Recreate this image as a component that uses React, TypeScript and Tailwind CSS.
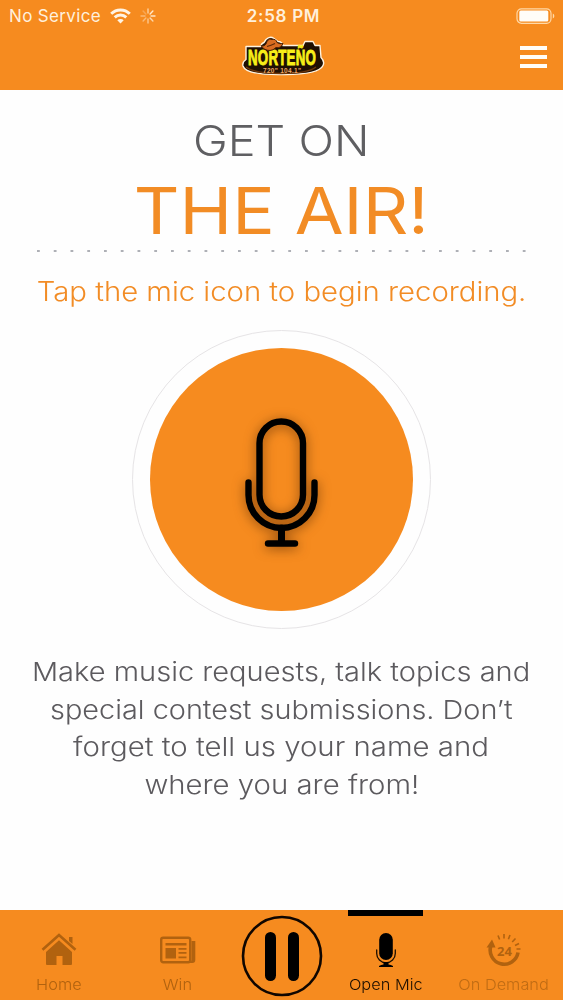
import React from 'react';

const StatusBar = () => {
  return <div className="flex h-8 items-center justify-between pl-[9px] pr-[8px] text-[17px] text-[#fff0dc]">
      <div className="flex w-[200px] items-center">
        <span className="w-[101px] pt-px whitespace-nowrap tracking-[0.35px]">No Service</span>
        <svg className="h-4 w-[21px]" viewBox="0 0 21 16" fill="none" stroke="#fff4e4" strokeWidth="2.9">
          <path d="M1.2 5.8a13.2 13.2 0 0 1 18.6 0" />
          <path d="M4.7 9.4a8.3 8.3 0 0 1 11.6 0" />
          <path d="M10.5 15.6l-3.2-3.3a4.6 4.6 0 0 1 6.4 0z" fill="#fff4e4" stroke="none" />
        </svg>
        <svg className="ml-[9px] h-4 w-4" viewBox="0 0 16 16" stroke="#ffe9cc" strokeWidth="1.4" strokeLinecap="round">
          <path d="M8 1v4" opacity=".75" />
          <path d="M12.9 3.1l-2.8 2.8" />
          <path d="M15 8h-4" opacity=".95" />
          <path d="M12.9 12.9l-2.8-2.8" opacity=".8" />
          <path d="M8 15v-4" opacity=".65" />
          <path d="M3.1 12.9l2.8-2.8" opacity=".5" />
          <path d="M1 8h4" opacity=".5" />
          <path d="M3.1 3.1l2.8 2.8" opacity=".3" />
        </svg>
      </div>
      <span className="pt-px pl-[3px] whitespace-nowrap font-semibold tracking-[0.7px]">2:58 PM</span>
      <div className="flex w-[200px] justify-end">
        <svg className="h-[17px] w-[39px]" viewBox="0 0 39 17">
          <rect x="1" y="0.8" width="34" height="14.5" rx="4.5" fill="none" stroke="#ffd9a8" strokeWidth="1.2" />
          <rect x="3.3" y="2.5" width="29" height="11" rx="1.5" fill="#fffdf8" />
          <path d="M36.8 5.5v5c2-.9 2-4.1 0-5z" fill="#ffd9a8" />
        </svg>
      </div>
    </div>
};

const Logo = () => {
  return <svg className="h-[42px] w-[80px] overflow-visible" viewBox="0 0 80 42">
      <path d="M4 10.5h15q0-3 3-4l2-3q4-4 8-1l4 3q4 0 5 4h20l2-4h8l2 4h5l1 12q4 4 2 8-4 9-38 9Q4 39.500 1 30q-1-4 3-6.500z" fill="#1f0f02" stroke="#fff3df" strokeWidth="1.4" strokeLinejoin="round" />
      <path d="M4 31q8 6.500 35 6.500t35-6.500" fill="none" stroke="#6e370a" strokeWidth="1.5" />
      <g transform="translate(6 28.5) scale(.59 1)">
        <text textLength="115" fill="#f8ee18" className="font-['Liberation_Sans',sans-serif] text-[22.5px] font-bold [stroke-width:1px] [stroke:#f8ee18]">NORTEÑO</text>
      </g>
      <path d="M19 9.500q4 2 6-4 2-4 5-2 4-1 5 3 3 2 6 1-2 5-7 4-3 3-6 3-6 0-9-5z" fill="#d96c20" stroke="#4d2305" strokeWidth="1" />
      <path d="M25 10.500q4-1 8-3" fill="none" stroke="#5c2908" strokeWidth="1.2" />
      <text x="21" y="36.500" textLength="38" fill="#f0a660" className="font-['Liberation_Sans',sans-serif] text-[6.5px] font-bold">720" 104.1"</text>
    </svg>
};

const Header = () => {
  return <header className="h-[90px] bg-[#f68b1f]">
      <StatusBar />
      <div className="flex h-[50px] items-center justify-between px-4">
        <span className="w-7" />
        <Logo />
        <button className="flex w-7 flex-col items-end gap-[4.5px]">
          <span className="h-[4.5px] w-[27px] bg-[#fffdf8]" />
          <span className="h-[4.5px] w-[27px] bg-[#fffdf8]" />
          <span className="h-[4.5px] w-[27px] bg-[#fffdf8]" />
        </button>
      </div>
    </header>
};

const MicButton = () => {
  return <button className="mt-[19px] flex size-[299px] shrink-0 items-center justify-center rounded-full border border-[#e6e4e6]">
      <span className="flex size-[263px] items-center justify-center rounded-full bg-[#f68b1f]">
        <svg className="h-[160px] w-[105px] overflow-visible drop-shadow-[0_2px_6px_rgba(70,30,0,0.6)]" viewBox="0 0 105 160" fill="none" stroke="#000" strokeWidth="6.4" strokeLinecap="round">
          <rect x="30.5" y="21.5" width="43.5" height="95" rx="21.75" />
          <path d="M19.5 82.5v12.5a33 33 0 0 0 66 0V82.5" />
          <path d="M52.5 128v13" strokeWidth="7" />
          <path d="M39 143.500h27" />
        </svg>
      </span>
    </button>
};

const Main = () => {
  return <main className="flex h-[820px] flex-col items-center bg-[#fefefe] pt-5">
      <h1 className="flex flex-col items-center whitespace-nowrap">
        <span className="scale-x-[1.1] text-[42.5px] leading-[61px] font-light text-[#5f5f62]">GET ON</span>
        <span className="scale-x-[1.09] text-[65px] leading-[79px] font-normal text-[#f28c25]">THE AIR!</span>
      </h1>
      <svg className="h-[2px] w-[490px]" viewBox="0 0 490 2">
        <path d="M0 1h490" stroke="#aeb0b6" strokeWidth="2" strokeDasharray="2.8 13.95" />
      </svg>
      <p className="mt-5 scale-x-[1.105] text-[26.5px] leading-[39px] font-light whitespace-nowrap text-[#f28c25]">Tap the mic icon to begin recording.</p>
      <MicButton />
      <p className="mt-6 flex flex-col items-center text-[26px] leading-[37.5px] font-light whitespace-nowrap text-[#5c5a5e]">
        <span className="scale-x-[1.117]">Make music requests, talk topics and</span>
        <span className="scale-x-[1.11]">special contest submissions. Don’t</span>
        <span className="scale-x-[1.13]">forget to tell us your name and</span>
        <span className="scale-x-[1.128]">where you are from!</span>
      </p>
    </main>
};

const HomeIcon = () => (
  <svg className="h-9 w-9" viewBox="0 0 36 36" fill="#b1620f">
    <path d="M18 8.300L31 20v12a1 1 0 0 1-1 1h-8.500v-9h-6v9H6a1 1 0 0 1-1-1V20z" />
    <path d="M1.5 17.800L18 3l16.500 14.800" fill="none" stroke="#b1620f" strokeWidth="2.6" />
    <path d="M28 5h3.500v7L28 9z" />
  </svg>
);

const NewsIcon = () => (
  <svg className="h-9 w-9" viewBox="0 0 36 36" fill="#b1620f">
    <rect x="1.2" y="5.7" width="29" height="24.5" rx="2" fill="none" stroke="#b1620f" strokeWidth="2.4" />
    <path d="M31.5 9h3.800v19q0 3-3 3h-3q2.200-1 2.200-3z" />
    <path d="M5.5 11h21v2.400h-21zM5.5 16h10.500v10.500H5.5zM18.5 16h8v1.800h-8zM18.5 20h8v1.800h-8zM18.5 24.500h8v1.800h-8z" />
  </svg>
);

const OpenMicIcon = () => (
  <svg className="h-9 w-9" viewBox="0 0 36 36">
    <rect x="11.2" y="1" width="13.6" height="27" rx="6.8" />
    <path d="M8.7 18v3.500a9.300 9.300 0 0 0 18.600 0V18" fill="none" stroke="#1d0f00" strokeWidth="1.3" strokeLinecap="round" />
    <path d="M15.5 30h5v2.500q2.500.3 4.500 1.500v1H11v-1q2-1.200 4.500-1.500z" />
  </svg>
);

const OnDemandIcon = () => (
  <svg className="h-9 w-9" viewBox="0 0 36 36" fill="#b1620f">
    <path d="M5 13.500A14 14 0 1 0 32 20.500" fill="none" stroke="#b1620f" strokeWidth="3.6" />
    <path d="M0.5 15.500L6 7.500l3.500 8z" />
    <path d="M12 3.500l1.600 4M18 2v4.500M24 3l-1.600 4.300M29.500 6.500l-3.300 3.500M33 11.500l-4 2M34.500 17h-4" stroke="#b1620f" strokeWidth="1.6" />
    <text x="18.5" y="23.500" textAnchor="middle" className="font-['Open_Sans',sans-serif] text-[13px] font-bold">24</text>
  </svg>
);

const Tab = ({ label, icon, classes, active = false }: { label: string; icon: React.ReactNode; classes: string; active?: boolean }) => {
  return <button className={`flex h-full flex-col items-center whitespace-nowrap ${classes}`}>
      <span className={`h-[6px] w-[75px] ${active ? 'bg-black' : ''}`} />
      <span className="mt-4">{icon}</span>
      <span className="mt-[7px] scale-x-[1.09] text-[15px] leading-5 font-light">{label}</span>
    </button>
};

const TabBar = () => {
  return <nav className="flex h-[90px] bg-[#f68b1f]">
      <Tab label="Home" icon={<HomeIcon />} classes="w-[118px] text-[#b1620f]" />
      <Tab label="Win" icon={<NewsIcon />} classes="w-[119px] text-[#b1620f]" />
      <button className="flex w-[89px] items-center justify-center pt-[2px]">
        <svg className="size-[82px]" viewBox="0 0 82 82">
          <circle cx="41" cy="41" r="39" fill="none" stroke="#100600" strokeWidth="2.6" />
          <rect x="24" y="17" width="11" height="49" rx="5.5" />
          <rect x="47" y="17" width="11" height="49" rx="5.5" />
        </svg>
      </button>
      <Tab label="Open Mic" icon={<OpenMicIcon />} classes="w-[119px] text-[#1d0f00]" active />
      <Tab label="On Demand" icon={<OnDemandIcon />} classes="w-[117px] text-[#c06c14]" />
    </nav>
};

const App = () => {
  return <div className="h-[1000px] w-[563px] overflow-hidden font-['Inter',sans-serif]">
      <Header />
      <Main />
      <TabBar />
    </div>
};

export default App;
